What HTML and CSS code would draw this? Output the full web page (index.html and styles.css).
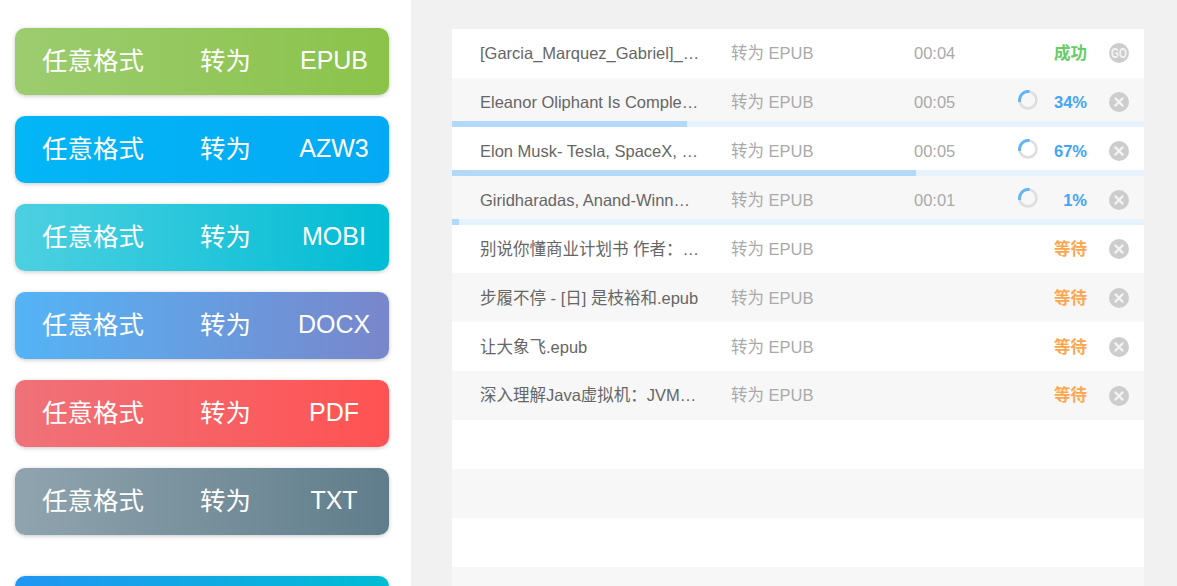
FILE: index.html
```html
<!DOCTYPE html>
<html lang="zh-CN">
<head>
  <meta charset="UTF-8" />
  <title>格式转换</title>
  <link rel="stylesheet" href="styles.css">
</head>
<body>
  <svg class="defs" width="0" height="0">
    <symbol id="spin" viewBox="0 0 20 20">
      <circle cx="10" cy="10" r="8.5" fill="none" stroke="#dedede" stroke-width="2.6"/>
      <path d="M1.8 12A8.5 8.5 0 0 1 11.5 1.6" fill="none" stroke="#64b5f6" stroke-width="3"/>
    </symbol>
    <symbol id="close" viewBox="0 0 20 20">
      <circle cx="10" cy="10" r="10" fill="#cdcdcd"/>
      <path d="M6.4 6.4l7.2 7.2M13.6 6.4l-7.2 7.2" stroke="#f4f4f4" stroke-width="2.2" stroke-linecap="round"/>
    </symbol>
  </svg>

  <!-- Format buttons -->
  <aside class="side">
    <div class="fmt fmt-epub"><span>任意格式</span><span>转为</span><span class="fmt-name">EPUB</span></div>
    <div class="fmt fmt-azw3"><span>任意格式</span><span>转为</span><span class="fmt-name">AZW3</span></div>
    <div class="fmt fmt-mobi"><span>任意格式</span><span>转为</span><span class="fmt-name">MOBI</span></div>
    <div class="fmt fmt-docx"><span>任意格式</span><span>转为</span><span class="fmt-name">DOCX</span></div>
    <div class="fmt fmt-pdf"><span>任意格式</span><span>转为</span><span class="fmt-name">PDF</span></div>
    <div class="fmt fmt-txt"><span>任意格式</span><span>转为</span><span class="fmt-name">TXT</span></div>
    <div class="fmt fmt-more"></div>
  </aside>

  <!-- Job list -->
  <main class="main">
    <div class="row">
      <span class="name">[Garcia_Marquez_Gabriel]_…</span>
      <span class="target">转为 EPUB</span>
      <span class="time">00:04</span>
      <span class="spinner"></span>
      <span class="status ok">成功</span>
      <span class="go"><span class="go-text">GO</span></span>
    </div>
    <div class="row">
      <span class="name">Eleanor Oliphant Is Comple…</span>
      <span class="target">转为 EPUB</span>
      <span class="time">00:05</span>
      <svg class="spinner"><use href="#spin"/></svg>
      <span class="status run">34%</span>
      <svg class="act"><use href="#close"/></svg>
      <div class="bar"><div class="bar-fill" style="width: 34%"></div></div>
    </div>
    <div class="row">
      <span class="name">Elon Musk- Tesla, SpaceX, …</span>
      <span class="target">转为 EPUB</span>
      <span class="time">00:05</span>
      <svg class="spinner"><use href="#spin"/></svg>
      <span class="status run">67%</span>
      <svg class="act"><use href="#close"/></svg>
      <div class="bar"><div class="bar-fill" style="width: 67%"></div></div>
    </div>
    <div class="row">
      <span class="name">Giridharadas, Anand-Winn…</span>
      <span class="target">转为 EPUB</span>
      <span class="time">00:01</span>
      <svg class="spinner"><use href="#spin"/></svg>
      <span class="status run">1%</span>
      <svg class="act"><use href="#close"/></svg>
      <div class="bar"><div class="bar-fill" style="width: 1%"></div></div>
    </div>
    <div class="row">
      <span class="name">别说你懂商业计划书 作者：…</span>
      <span class="target">转为 EPUB</span>
      <span class="time"></span>
      <span class="spinner"></span>
      <span class="status wait">等待</span>
      <svg class="act"><use href="#close"/></svg>
    </div>
    <div class="row">
      <span class="name">步履不停 - [日] 是枝裕和.epub</span>
      <span class="target">转为 EPUB</span>
      <span class="time"></span>
      <span class="spinner"></span>
      <span class="status wait">等待</span>
      <svg class="act"><use href="#close"/></svg>
    </div>
    <div class="row">
      <span class="name">让大象飞.epub</span>
      <span class="target">转为 EPUB</span>
      <span class="time"></span>
      <span class="spinner"></span>
      <span class="status wait">等待</span>
      <svg class="act"><use href="#close"/></svg>
    </div>
    <div class="row">
      <span class="name">深入理解Java虚拟机：JVM…</span>
      <span class="target">转为 EPUB</span>
      <span class="time"></span>
      <span class="spinner"></span>
      <span class="status wait">等待</span>
      <svg class="act"><use href="#close"/></svg>
    </div>
    <div class="row"></div>
    <div class="row"></div>
    <div class="row"></div>
    <div class="row"></div>
  </main>
</body>
</html>
```

FILE: styles.css
```css
* { margin: 0; padding: 0; box-sizing: border-box; }

html, body {
  height: 100%;
  overflow: hidden;
}

body {
  display: flex;
  font-family: "Liberation Sans", "Noto Sans CJK SC", sans-serif;
  background: #f1f1f1;
}

.defs { position: absolute; }

.side {
  width: 411px;
  height: 586px;
  flex-shrink: 0;
  padding: 28px 22px 0 15px;
  background: #fff;
  overflow: hidden;
}

.fmt {
  display: grid;
  grid-template-columns: 158px 84px 100px;
  align-items: center;
  height: 67px;
  margin-bottom: 21px;
  padding-left: 27px;
  border-radius: 10px;
  font-size: 25.5px;
  line-height: 1;
  color: #fff;
  box-shadow: 0 1px 4px rgba(0, 0, 0, 0.22);
}

.fmt-name {
  margin-top: -3px;
  font-size: 25px;
  text-align: center;
}

.fmt-epub { background: linear-gradient(to right, #9ccc6f, #8bc34a); }
.fmt-azw3 { background: linear-gradient(to right, #03b6f6, #03a9f4); }
.fmt-mobi { background: linear-gradient(to right, #4dd0e1, #00bcd4); }
.fmt-docx { background: linear-gradient(to right, #54b4f6, #7986cb); }
.fmt-pdf { background: linear-gradient(to right, #ef7279, #ff5252); }
.fmt-txt { background: linear-gradient(to right, #90a4ae, #607d8b); }
.fmt-more { margin-top: 41px; background: linear-gradient(to right, #2196f3, #00bcd4); }

.main {
  width: 692px;
  height: 557px;
  margin: 29px 0 0 41px;
  overflow: hidden;
}

.row {
  position: relative;
  display: flex;
  align-items: center;
  height: 48.9px;
  padding-left: 28px;
  font-size: 16.5px;
  line-height: 1;
  background: #fff;
}

.row:nth-child(even) { background: #f7f7f7; }

.name {
  width: 251px;
  color: #666;
  white-space: nowrap;
}

.target {
  width: 183px;
  color: #aaa;
}

.time {
  width: 104px;
  color: #aaa;
}

.spinner {
  width: 20px;
  height: 20px;
  margin-top: -5px;
}

.status {
  width: 49px;
  font-weight: bold;
  text-align: right;
}

.ok { color: #66cc66; }
.run { color: #42a5f5; }
.wait { color: #ffa64d; }

.act, .go {
  width: 20px;
  height: 20px;
  margin-left: 22px;
}

.go {
  display: flex;
  justify-content: center;
  align-items: center;
  border-radius: 50%;
  background: #cdcdcd;
}

.go-text {
  color: #f4f4f4;
  font-size: 14px;
  font-weight: bold;
  transform: scaleX(0.72);
}

.bar {
  position: absolute;
  left: 0;
  right: 0;
  bottom: 0;
  height: 6px;
  background: #e6f2fd;
}

.bar-fill {
  height: 100%;
  background: #b3d9f9;
}
```
